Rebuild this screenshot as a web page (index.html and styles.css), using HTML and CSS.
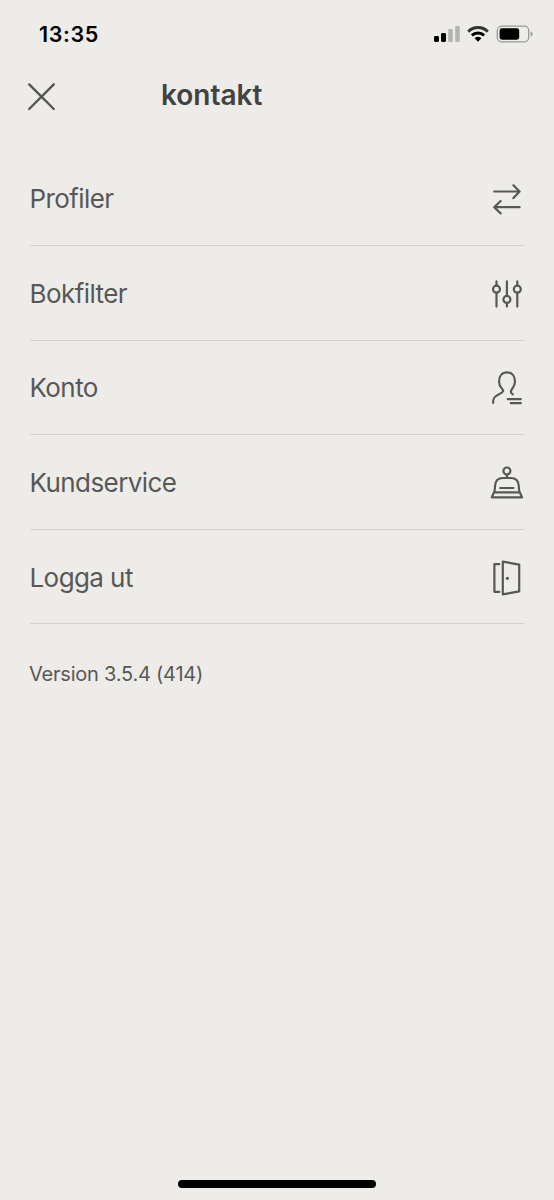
FILE: index.html
```html
<!DOCTYPE html>
<html lang="sv">
<head>
<meta charset="utf-8">
<title>kontakt</title>
<link rel="stylesheet" href="styles.css">
</head>
<body>
<div class="screen">
  <div class="status">
    <span class="time">13:35</span>
    <svg class="indicators" width="100" height="20" viewBox="434 24 100 20">
      <rect x="434" y="36" width="5" height="6" rx="1.4"/>
      <rect x="441" y="33" width="5" height="9" rx="1.4"/>
      <rect x="448.2" y="29" width="4.6" height="13" rx="1.3" fill="#b4b4b2"/>
      <rect x="455.2" y="26" width="4.6" height="16" rx="1.3" fill="#b4b4b2"/>
      <g fill="none" stroke="#000" stroke-width="3">
        <path d="M468.2 31.6a14 14 0 0 1 19.6 0" stroke="#333"/>
        <path d="M471.9 35.4a8.7 8.7 0 0 1 12.2 0"/>
      </g>
      <path d="M474.6 38.2a4.9 4.9 0 0 1 6.8 0L478 41.8z"/>
      <rect x="497.3" y="26.2" width="31.4" height="15.6" rx="4.4" fill="none" stroke="#999998" stroke-width="1.3"/>
      <rect x="499.6" y="28.3" width="19.6" height="11.4" rx="2.4"/>
      <path d="M530.6 31.6q2.2.8 2.2 2.5t-2.2 2.5z" fill="#999998"/>
    </svg>
  </div>
  <header class="header">
    <svg class="close" width="30" height="30" viewBox="0 0 30 30"><path d="M2.2 3.4 26.8 28M26.8 3.4 2.2 28"/></svg>
    <h1 class="title">kontakt</h1>
  </header>
  <ul class="menu">
    <li class="row"><span class="label">Profiler</span>
      <svg class="icon" viewBox="0 0 36 36"><path d="M4.2 10.5h25.4M23.4 4.3l6.2 6.2-6.2 6.6M29.6 26.2H4.2M10.6 20l-6.4 6.2 6.4 6.2"/></svg></li>
    <li class="row"><span class="label">Bokfilter</span>
      <svg class="icon" viewBox="0 0 36 36"><path d="M6.5 5.4v4M6.5 17v13.6M16.9 5.4v14M16.9 27.1v3.5M27.3 5.4v4M27.3 17v13.6"/><circle cx="6.5" cy="13.2" r="3.5"/><circle cx="16.9" cy="23.4" r="3.5"/><circle cx="27.3" cy="13.2" r="3.5"/></svg></li>
    <li class="row"><span class="label">Konto</span>
      <svg class="icon" viewBox="0 0 36 36"><path d="M3.1 33c0-5 1.3-6.4 4.2-7.8 3-1.5 5.7-2.8 5.9-4.3.2-1.8-4.2-3.4-4.2-9.3C9 6 12 2.4 17 2.4s8 3.6 8 9.2c0 6-4.5 7.7-4.1 10.2.2 1.2.9 1.9 1.8 2.5M17.7 29.1h13.1M20.8 33.2h10"/></svg></li>
    <li class="row"><span class="label">Kundservice</span>
      <svg class="icon" viewBox="0 0 36 36"><circle cx="16.9" cy="6" r="3.5"/><path d="M16.9 9.6v3.4M4 27.3c.8-1 .9-3 1-6 .2-5.2 3.2-8.3 8-8.3h7.8c4.8 0 7.8 3.1 8 8.3.1 3 .2 5 1 6M4 27.3h25.8l2.2 5H1.8zM10.2 23h13.2"/></svg></li>
    <li class="row"><span class="label">Logga ut</span>
      <svg class="icon" viewBox="0 0 36 36"><path d="M9.3 4.2H4.4v27.6h4.9M12.8 1.6l16.4 3v26.7l-16.4 3.1z"/><circle class="knob" cx="17.4" cy="18.3" r="1.6"/></svg></li>
  </ul>
  <p class="version">Version 3.5.4 (414)</p>
  <div class="home"></div>
</div>
</body>
</html>
```
FILE: styles.css
```css
* { box-sizing: border-box; }
body { margin: 0; background: #edece8; }
.screen {
  display: flex;
  flex-direction: column;
  height: 1200px;
  color: #585858;
  font-family: Inter, "Liberation Sans", sans-serif;
}
.status {
  display: flex;
  justify-content: space-between;
  align-items: center;
  height: 68px;
  padding: 0 20px 0 39px;
}
.time {
  color: #000;
  font-weight: 600;
  font-size: 21.5px;
  line-height: 28px;
  letter-spacing: 0.6px;
}
.indicators { display: block; }
.header {
  display: flex;
  align-items: center;
  height: 83.5px;
  padding: 0 0 27px 27px;
}
.close { fill: none; stroke: #555; stroke-width: 2.4; stroke-linecap: round; }
.title {
  margin: 0 0 2px 104px;
  color: #424242;
  font-size: 28px;
  line-height: 34px;
  font-weight: 600;
  letter-spacing: 0;
}
.menu { margin: 0; padding: 0 30px 0 29.5px; list-style: none; }
.row {
  display: flex;
  justify-content: space-between;
  align-items: center;
  height: 94.6px;
  padding-top: 2px;
  border-bottom: 1px solid #d1d1ce;
}
.label {
  padding-bottom: 1px;
  font-size: 26px;
  letter-spacing: -0.58px;
}
.icon {
  width: 36px;
  height: 36px;
  margin-right: -2px;
  fill: none;
  stroke: #585858;
  stroke-width: 2.2;
  stroke-linecap: round;
  stroke-linejoin: round;
}
.knob { fill: #585858; stroke: none; }
.version {
  margin: 36px 0 0 29px;
  font-size: 20px;
  line-height: 28px;
  letter-spacing: -0.22px;
}
.home {
  width: 198px;
  height: 8px;
  margin: auto auto 12px 178px;
  border-radius: 4px;
  background: #000;
}
```
